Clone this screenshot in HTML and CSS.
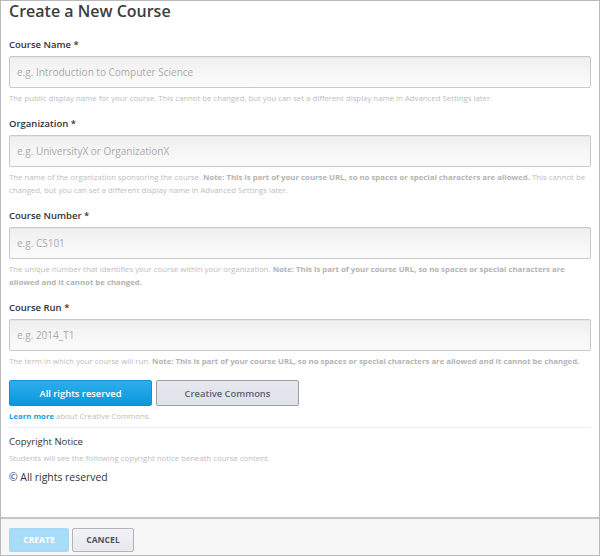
FILE: index.html
```html
<!DOCTYPE html>
<html>
<head>
<meta charset="utf-8">
<title>Create a New Course</title>
<link rel="stylesheet" href="styles.css">
</head>
<body>
<div class="page">
  <main class="content">
    <h1 class="title">Create a New Course</h1>

    <div class="field">
      <label class="label">Course Name *</label>
      <input class="input" type="text" placeholder="e.g. Introduction to Computer Science">
      <p class="help">The public display name for your course. This cannot be changed, but you can set a different display name in Advanced Settings later.</p>
    </div>

    <div class="field">
      <label class="label">Organization *</label>
      <input class="input" type="text" placeholder="e.g. UniversityX or OrganizationX">
      <p class="help">The name of the organization sponsoring the course. <strong>Note: This is part of your course URL, so no spaces or special characters are allowed.</strong> This cannot be changed, but you can set a different display name in Advanced Settings later.</p>
    </div>

    <div class="field">
      <label class="label">Course Number *</label>
      <input class="input" type="text" placeholder="e.g. CS101">
      <p class="help">The unique number that identifies your course within your organization. <strong>Note: This is part of your course URL, so no spaces or special characters are allowed and it cannot be changed.</strong></p>
    </div>

    <div class="field">
      <label class="label">Course Run *</label>
      <input class="input" type="text" placeholder="e.g. 2014_T1">
      <p class="help">The term in which your course will run. <strong>Note: This is part of your course URL, so no spaces or special characters are allowed and it cannot be changed.</strong></p>
    </div>

    <div class="license">
      <button class="lic-btn lic-active" type="button">All rights reserved</button>
      <button class="lic-btn lic-idle" type="button">Creative Commons</button>
    </div>
    <p class="help learn"><a class="learn-link" href="#">Learn more</a> about Creative Commons.</p>

    <div class="sep"></div>

    <h2 class="label cn-title">Copyright Notice</h2>
    <p class="help">Students will see the following copyright notice beneath course content.</p>
    <p class="notice">© All rights reserved</p>
  </main>

  <footer class="actions">
    <button class="act act-create" type="button">CREATE</button>
    <button class="act act-cancel" type="button">CANCEL</button>
  </footer>
</div>
</body>
</html>
```

FILE: styles.css
```css
* { box-sizing: border-box; }

html, body {
  margin: 0;
  padding: 0;
  background: #ffffff;
}

body {
  font-family: "Open Sans", "Liberation Sans", sans-serif;
  color: #333333;
}

.page {
  width: 600px;
  height: 556px;
  border: 1px solid #b9b9b9;
  display: flex;
  flex-direction: column;
  background: #ffffff;
}

.content {
  flex: 1;
  padding: 0 8px;
  display: flex;
  flex-direction: column;
}

.title {
  margin: 0 0 17px 0;
  font-size: 16px;
  line-height: 20px;
  font-weight: 600;
  color: #3d3d3d;
}

.field {
  display: flex;
  flex-direction: column;
  margin-bottom: 12px;
}

.label {
  display: block;
  margin: 0;
  font-size: 9.5px;
  line-height: 13px;
  font-weight: 600;
  color: #333333;
}

.input {
  margin-top: 5px;
  height: 32px;
  width: 100%;
  border: 1px solid #c9c9c9;
  border-radius: 2px;
  background: linear-gradient(to bottom, #efefef 0%, #f7f7f7 60%, #fbfbfb 100%);
  box-shadow: inset 0 1px 1px rgba(0,0,0,0.04);
  padding: 0 7px;
  font-family: "Open Sans", "Liberation Sans", sans-serif;
  font-size: 10px;
  color: #555;
  outline: none;
}

.input::placeholder {
  color: #ababab;
}

.help {
  margin: 4px 0 0 0;
  font-size: 7.8px;
  line-height: 13px;
  color: #bdbdbd;
}

.help strong {
  font-weight: 700;
  color: #b3b3b3;
}

.license {
  display: flex;
  gap: 4px;
}

.lic-btn {
  height: 26px;
  width: 143px;
  border-radius: 2px;
  font-family: "Open Sans", "Liberation Sans", sans-serif;
  font-size: 9.4px;
  font-weight: 600;
  padding: 0;
  cursor: pointer;
}

.lic-active {
  color: #ffffff;
  border: 1px solid #0d92d6;
  background: linear-gradient(to bottom, #2eaeeb 0%, #0a97dd 100%);
}

.lic-idle {
  color: #5b6270;
  border: 1px solid #9a9ea7;
  background: linear-gradient(to bottom, #e6e8ee 0%, #dfe2e9 100%);
}

.learn {
  margin-top: 4px;
}

.learn-link {
  color: #1a9fdd;
  font-weight: 700;
  text-decoration: none;
}

.sep {
  margin-top: 4px;
  height: 1px;
  background: #ececec;
}

.cn-title {
  margin-top: 7px;
  font-weight: 500;
}

.notice {
  margin: 6px 0 0 0;
  font-size: 10.4px;
  line-height: 13px;
  color: #333333;
}

.actions {
  height: 38px;
  border-top: 2px solid #c6c6c6;
  background: #f7f7f7;
  padding: 9px 8px 0 8px;
  display: flex;
  gap: 3px;
  align-items: flex-start;
}

.act {
  height: 24px;
  border-radius: 2px;
  font-family: "Open Sans", "Liberation Sans", sans-serif;
  font-size: 8.6px;
  font-weight: 700;
  padding: 0;
  cursor: pointer;
}

.act-create {
  width: 60px;
  color: #ffffff;
  border: 1px solid #a3daf5;
  background: #a8dcf6;
}

.act-cancel {
  width: 62px;
  color: #4d5563;
  border: 1px solid #b1b5bd;
  background: linear-gradient(to bottom, #f2f3f6 0%, #e7e9ee 100%);
}
```
